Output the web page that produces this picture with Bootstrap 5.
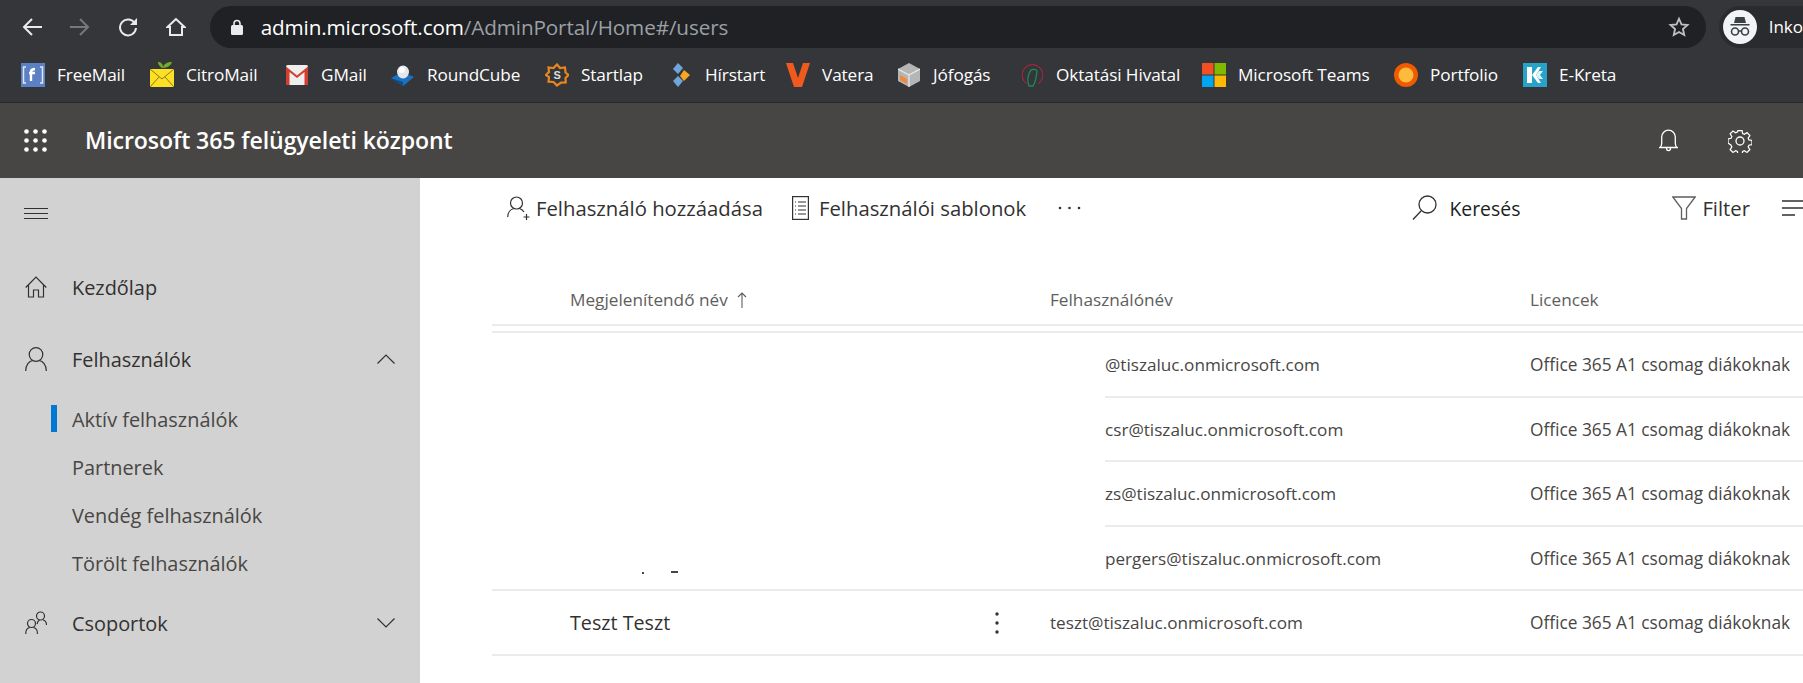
<!DOCTYPE html>
<html lang="hu">
<head>
<meta charset="utf-8">
<title>Microsoft 365 felügyeleti központ</title>
<link href="https://cdn.jsdelivr.net/npm/bootstrap@5.3.0/dist/css/bootstrap.min.css" rel="stylesheet">
<style>
html,body{height:683px;overflow:hidden;background:#fff}
body{font-family:"Open Sans","Noto Sans",sans-serif;color:#323130}
svg{display:block;flex:none}
.chrome-top{height:48px;background:#35363a;padding:6px 0 0 0}
.nav-btns{width:211px;padding-left:22px;gap:28px;height:42px}
.addr{width:1496px;height:42px;background:#202124;border-radius:21px;padding:0 16px 0 21px;flex:none}
.addr-text{font-size:20.7px;color:#9aa0a6;margin-left:18px;line-height:1;letter-spacing:-.12px}
.addr-text b{font-weight:400;color:#fff}
.profile{margin-left:13px;height:42px;flex:none;background:#2a2b2e;border-radius:21px 0 0 21px;padding-left:4px;gap:12px}
.profile-face{width:34px;height:34px;border-radius:50%;background:#f1f3f4}
.profile span{color:#fff;font-size:17px}
.marks{height:55px;background:#35363a;border-bottom:1px solid #27282b;padding-left:21px;display:grid;grid-template-columns:129px 135px 106px 154px 124px 117px 111px 123px 182px 192px 129px 1fr;align-items:center}
.mark-item{display:flex;align-items:center;color:#fff;font-size:17.2px;white-space:nowrap;letter-spacing:-.1px}
.mark-icon{width:24px;margin-right:12px;flex:none;display:flex;justify-content:center}
.o365-bar{height:75px;background:#484644;color:#fff;padding:0 51px 0 24px}
.o365-title{font-size:23.1px;font-weight:600;margin-left:38px;letter-spacing:-.1px}
.o365-tools{gap:50px}
.shell{height:505px}
.side{width:420px;background:#d2d2d2;flex:none;position:relative}
.burger{padding:30px 0 0 24px;height:62px}
.burger i{display:block;width:24px;height:1px;background:#323130;margin-bottom:4px}
.side-row{display:flex;align-items:center;padding-left:25px;height:40px;font-size:19.9px;color:#323130}
.side-row .lbl{margin-left:25px;flex-grow:1;padding-top:2px}
.side-row .chev{margin-right:25px}
.side-sub{display:flex;align-items:center;height:48px;font-size:19.9px;padding:2px 0 0 72px;color:#484644;position:relative}
.side-sub.on::before{content:"";position:absolute;left:51px;top:10px;width:6px;height:27px;background:#0078d4}
.r1{margin-top:27px}.r2{margin-top:32px}.subs{margin-top:16px}.r3{margin-top:16px}
.work{flex-grow:1;min-width:0;overflow:hidden;padding-left:72px}
.tbar{height:60px;font-size:20.3px;color:#323130;padding-left:15px}
.tbar .it{display:flex;align-items:center;white-space:nowrap}
.it1{gap:6px}.it2{gap:10px;margin-left:29px}.it3{margin-left:32px}
.it4{gap:12px;margin-left:auto;margin-right:152px;color:#201f1e;font-size:19.4px;font-weight:500}
.it4 span{padding-top:2px}
.it5{gap:6px}
.it6{margin-left:32px;margin-right:-1px}
.thead-row{display:grid;grid-template-columns:558px 480px 1fr;height:88px;padding-top:44px;font-size:17.2px;color:#605e5c;border-bottom:2px solid #edebe9}
.thead-row>div{line-height:33px;padding-top:1px}
.th1{padding-left:78px;display:flex;align-items:flex-start;gap:9px}
.th1 svg{margin-top:9px}
.lead-line{height:5px;border-bottom:2px solid #edebe9;box-sizing:content-box;padding-top:0}
.mask-row{display:grid;grid-template-columns:613px 425px 1fr;height:64.5px;font-size:17.15px;color:#484644}
.mask-row.last-mask{height:62.5px}
.mask-row>div{display:flex;align-items:center;white-space:nowrap;padding-top:2px}
.mask-row .lined{border-bottom:2px solid #edebe9}
.mask-row .lic,.user-row .lic{font-size:17.3px}
.frag{position:relative;height:100%}
.frag svg{position:absolute;left:150px;top:44px}
.user-row{display:grid;grid-template-columns:558px 480px 1fr;height:67px;font-size:17.15px;color:#484644;border-top:2px solid #edebe9;border-bottom:2px solid #edebe9}
.user-row>div{display:flex;align-items:center;white-space:nowrap;padding-top:1px}
.uname{padding-left:78px;padding-right:51px;justify-content:space-between;font-size:19.7px;font-weight:500;color:#323130}
</style>
</head>
<body>
<div class="chrome-top d-flex">
  <div class="nav-btns d-flex align-items-center">
    <svg width="20" height="20" viewBox="0 0 20 20" fill="none" stroke="#e8eaed" stroke-width="2"><path d="M20 10H2M10 2l-8 8 8 8"/></svg>
    <svg width="20" height="20" viewBox="0 0 20 20" fill="none" stroke="#77787b" stroke-width="2"><path d="M0 10h18M10 2l8 8-8 8"/></svg>
    <svg width="20" height="20" viewBox="0 0 20 20" fill="none" stroke="#e8eaed" stroke-width="2"><path d="M17 6.500A8 8 0 1 0 18 11"/><path d="M19 1v7h-7z" fill="#e8eaed" stroke="none"/></svg>
    <svg width="20" height="20" viewBox="0 0 20 20" fill="none" stroke="#e8eaed" stroke-width="2"><path d="M10 2L1.500 10H4v8h12v-8h2.500z" stroke-linejoin="miter"/></svg>
  </div>
  <div class="addr d-flex align-items-center">
    <svg width="12" height="16" viewBox="0 0 12 16"><path d="M3 6V4.500a3 3 0 0 1 6 0V6" fill="none" stroke="#e8eaed" stroke-width="1.600"/><rect y="6" width="12" height="10" rx="1.500" fill="#e8eaed"/></svg>
    <div class="addr-text flex-grow-1"><b>admin.microsoft.com</b>/AdminPortal/Home#/users</div>
    <svg width="22" height="22" viewBox="0 0 24 24" fill="none" stroke="#bdc1c6" stroke-width="2"><path d="M12 3l2.700 6.100 6.600.7-5 4.400 1.400 6.500L12 17.400l-5.700 3.300 1.400-6.500-5-4.400 6.600-.7z"/></svg>
  </div>
  <div class="profile d-flex align-items-center flex-grow-1">
    <div class="profile-face d-flex align-items-center justify-content-center">
      <svg width="26" height="26" viewBox="0 0 26 26"><path d="M7 9l1.500-6h9L19 9zM3.500 10h19v1.500h-19z" fill="#3c4043"/><circle cx="8" cy="17.500" r="3.500" fill="none" stroke="#3c4043" stroke-width="1.600"/><circle cx="18" cy="17.500" r="3.500" fill="none" stroke="#3c4043" stroke-width="1.600"/><path d="M11.500 17h3" stroke="#3c4043" stroke-width="1.500"/></svg>
    </div>
    <span>Inko</span>
  </div>
</div>
<div class="marks">
  <div class="mark-item"><span class="mark-icon"><svg width="24" height="24" viewBox="0 0 24 24"><rect width="24" height="24" fill="#5b80c4"/><path d="M5 4H2.500v16H5M19 4h2.500v16H19" fill="none" stroke="#dfe7f5" stroke-width="1.500"/><path d="M10 18V9c0-2 1-3 4-3M8 10h6" fill="none" stroke="#fff" stroke-width="2.400"/></svg></span>FreeMail</div>
  <div class="mark-item"><span class="mark-icon"><svg width="24" height="28" viewBox="0 0 24 28"><path d="M12 7C9 5 8 3 8 1c3 0 5 2 5 5 1-3 4-5 9-5-1 3-4 6-10 6z" fill="#6fae2c"/><rect y="8" width="24" height="18" fill="#fde025"/><path d="M0 8l12 10L24 8M0 26l9-10M24 26l-9-10" fill="none" stroke="#8a7a10" stroke-width="1"/></svg></span>CitroMail</div>
  <div class="mark-item"><span class="mark-icon"><svg width="22" height="20" viewBox="0 0 22 20"><rect width="22" height="20" rx="1.500" fill="#eee"/><path d="M0 1.500l11 9 11-9V20h-3.500V7L11 13 3.500 7v13H0z" fill="#d23f31"/></svg></span>GMail</div>
  <div class="mark-item"><span class="mark-icon"><svg width="24" height="24" viewBox="0 0 24 24"><path d="M0 15l11-6 12 5-11 9z" fill="#1d72c0"/><path d="M0 15l12 8v-4z" fill="#0d4c8a"/><ellipse cx="12" cy="9" rx="6" ry="6.500" fill="#e4e8ec"/><ellipse cx="11" cy="7" rx="3" ry="3" fill="#fff"/></svg></span>RoundCube</div>
  <div class="mark-item"><span class="mark-icon"><svg width="24" height="24" viewBox="0 0 24 24"><path d="M12 1.500l3 3.500 5-.5.500 5 3 2.500-3 3 .2 4.500-4.700.2L12 22.500 8.500 19l-5-.3.500-4.700L.7 12 4 9l-.5-4.500 5 .5z" fill="none" stroke="#e8871e" stroke-width="2.200"/><text x="12" y="16" font-size="11" font-weight="700" text-anchor="middle" fill="#ddd" font-family="Liberation Sans,sans-serif">S</text></svg></span>Startlap</div>
  <div class="mark-item"><span class="mark-icon"><svg width="20" height="24" viewBox="0 0 20 24"><path d="M7 0l5 5-5 6-5-5z" fill="#6ea6dc"/><path d="M13 7l6 5-6 6-4-5z" fill="#f5a623"/><path d="M7 13l5 5-5 6-5-6z" fill="#6ea6dc"/></svg></span>Hírstart</div>
  <div class="mark-item"><span class="mark-icon"><svg width="24" height="24" viewBox="0 0 24 24"><path d="M0 0h7l5 15L17 0h7l-8 24H8z" fill="#f05a1e"/></svg></span>Vatera</div>
  <div class="mark-item"><span class="mark-icon"><svg width="22" height="24" viewBox="0 0 22 24"><path d="M11 0l11 6v12l-11 6L0 18V6z" fill="#b5b5b5"/><path d="M0 6l11 6 11-6M11 12v12" fill="none" stroke="#e8e8e8" stroke-width="1.200"/><path d="M2 12l7 4v5l-7-4z" fill="#ef8a3c"/></svg></span>Jófogás</div>
  <div class="mark-item"><span class="mark-icon"><svg width="21" height="24" viewBox="0 0 21 24" fill="none"><path d="M5 21A10.500 10.500 0 1 1 16 21" stroke="#c4223d" stroke-width="1"/><path d="M7 23c-2-6-1-12 2-16 2-1 5-1 6 1-1 6-1 11-4 15z" stroke="#1c8a5c" stroke-width="1.300"/></svg></span>Oktatási Hivatal</div>
  <div class="mark-item"><span class="mark-icon"><svg width="24" height="24" viewBox="0 0 24 24"><rect width="11.500" height="11.500" fill="#f25022"/><rect x="12.500" width="11.500" height="11.500" fill="#7fba00"/><rect y="12.500" width="11.500" height="11.500" fill="#00a4ef"/><rect x="12.500" y="12.500" width="11.500" height="11.500" fill="#ffb900"/></svg></span>Microsoft Teams</div>
  <div class="mark-item"><span class="mark-icon"><svg width="24" height="24" viewBox="0 0 24 24"><circle cx="12" cy="12" r="12" fill="#f05a00"/><circle cx="12" cy="12" r="7.500" fill="#fdbb3e"/></svg></span>Portfolio</div>
  <div class="mark-item"><span class="mark-icon"><svg width="24" height="24" viewBox="0 0 24 24"><rect width="24" height="24" fill="#27a3c9"/><path d="M4 4h5v16H4zM9 12l6-8h3l-5 8 5 8h-3z" fill="#fff"/><path d="M16 8l-3 4 3 4h4l-3-4 3-4z" fill="#e2f4fa"/></svg></span>E-Kreta</div>
</div>
<div class="o365-bar d-flex align-items-center">
  <svg width="23" height="23" viewBox="0 0 23 23" fill="#fff"><circle cx="2.500" cy="2.500" r="2.300"/><circle cx="11.500" cy="2.500" r="2.300"/><circle cx="20.500" cy="2.500" r="2.300"/><circle cx="2.500" cy="11.500" r="2.300"/><circle cx="11.500" cy="11.500" r="2.300"/><circle cx="20.500" cy="11.500" r="2.300"/><circle cx="2.500" cy="20.500" r="2.300"/><circle cx="11.500" cy="20.500" r="2.300"/><circle cx="20.500" cy="20.500" r="2.300"/></svg>
  <div class="o365-title flex-grow-1">Microsoft 365 felügyeleti központ</div>
  <div class="o365-tools d-flex align-items-center">
    <svg width="19" height="23" viewBox="0 0 19 23" fill="none" stroke="#fff" stroke-width="1.300"><path d="M.7 18.500c1.500-1 2-2 2-4V8a6.800 6.800 0 0 1 13.600 0v6.500c0 2 .5 3 2 4z"/><path d="M7.500 19c0 3.500 4 3.500 4 0"/></svg>
    <svg width="24" height="24" viewBox="0 0 24 24" fill="none" stroke="#fff" stroke-width="1.300"><circle cx="12" cy="12" r="4"/><path d="M9.800 1h4.400l.6 3.200 1.800.8 2.800-1.800 3 3-1.800 2.800.8 1.800 3.200.6v4.400l-3.200.6-.8 1.800 1.800 2.800-3 3-2.800-1.800-1.800.8-.6 3.200H9.800l-.6-3.200-1.800-.8-2.800 1.800-3-3 1.800-2.800-.8-1.800L-.6 14V9.700l3.200-.6.800-1.800-1.800-2.800 3-3 2.800 1.800 1.800-.8z" transform="translate(.6 .6) scale(.95)"/></svg>
  </div>
</div>
<div class="shell d-flex">
  <nav class="side">
    <div class="burger"><i></i><i></i><i></i></div>
    <div class="side-row r1">
      <svg width="22" height="22" viewBox="0 0 22 22" fill="none" stroke="#323130" stroke-width="1.200"><path d="M.7 11.500L11 1l10.300 10.500M3.500 9v12h5v-7h5v7h5V9"/></svg>
      <span class="lbl">Kezdőlap</span>
    </div>
    <div class="side-row r2">
      <svg width="22" height="24" viewBox="0 0 22 24" fill="none" stroke="#323130" stroke-width="1.200"><circle cx="11" cy="7.500" r="6.800"/><path d="M.7 24c0-6 3.500-10 7-10.500M21.300 24c0-6-3.500-10-7-10.500"/></svg>
      <span class="lbl">Felhasználók</span>
      <svg class="chev" width="18" height="10" viewBox="0 0 18 10" fill="none" stroke="#323130" stroke-width="1.200"><path d="M.5 9.500L9 1l8.500 8.500"/></svg>
    </div>
    <div class="subs">
      <div class="side-sub on">Aktív felhasználók</div>
      <div class="side-sub">Partnerek</div>
      <div class="side-sub">Vendég felhasználók</div>
      <div class="side-sub">Törölt felhasználók</div>
    </div>
    <div class="side-row r3">
      <svg width="22" height="24" viewBox="0 0 22 24" fill="none" stroke="#323130" stroke-width="1.200"><circle cx="15.500" cy="5" r="4"/><circle cx="6.500" cy="12.500" r="4"/><path d="M.7 23c0-3 1.500-6 4-6.500M12.500 23c0-3-1.500-6-4-6.500M12 13c.5-2 1.500-3.500 2.500-4M21.500 14c0-2.500-1.500-4.500-3.500-5"/></svg>
      <span class="lbl">Csoportok</span>
      <svg class="chev" width="18" height="10" viewBox="0 0 18 10" fill="none" stroke="#323130" stroke-width="1.200"><path d="M.5.500L9 9l8.500-8.500"/></svg>
    </div>
  </nav>
  <main class="work">
    <div class="tbar d-flex align-items-center">
      <div class="it it1">
        <svg width="23" height="25" viewBox="0 0 23 25" fill="none" stroke="#323130" stroke-width="1.200"><circle cx="9.500" cy="7" r="6"/><path d="M.7 21c0-4 2.500-7.500 6-8.500M12.500 12.500c2 .6 3.500 2 4.500 3.500M19.500 18v6M16.500 21h6"/></svg>
        <span>Felhasználó hozzáadása</span>
      </div>
      <div class="it it2">
        <svg width="17" height="24" viewBox="0 0 17 24" fill="none" stroke="#323130" stroke-width="1.200"><rect x=".6" y=".6" width="15.800" height="22.800"/><path d="M6 6h8M6 10h8M6 14h8M6 18h8M3 6h1M3 10h1M3 14h1M3 18h1"/></svg>
        <span>Felhasználói sablonok</span>
      </div>
      <div class="it it3">
        <svg width="23" height="4" viewBox="0 0 23 4" fill="#323130"><circle cx="2" cy="2" r="1.300"/><circle cx="11.500" cy="2" r="1.300"/><circle cx="21" cy="2" r="1.300"/></svg>
      </div>
      <div class="it it4">
        <svg width="25" height="25" viewBox="0 0 25 25" fill="none" stroke="#323130" stroke-width="1.300"><circle cx="15.500" cy="9.500" r="8.500"/><path d="M9 16L1 24.500"/></svg>
        <span>Keresés</span>
      </div>
      <div class="it it5">
        <svg width="24" height="24" viewBox="0 0 24 24" fill="none" stroke="#605e5c" stroke-width="1.300"><path d="M.8 1h22.400L14.500 12.500V23h-5V12.500z"/></svg>
        <span>Filter</span>
      </div>
      <div class="it it6">
        <svg width="22" height="16" viewBox="0 0 22 16" fill="none" stroke="#323130" stroke-width="1.300"><path d="M0 1h22M0 8h22M0 15h13"/></svg>
      </div>
    </div>
    <div class="thead-row">
      <div class="th1">Megjelenítendő név <svg width="10" height="16" viewBox="0 0 10 16" fill="none" stroke="#605e5c" stroke-width="1.100"><path d="M5 16V1M1 5l4-4 4 4"/></svg></div>
      <div>Felhasználónév</div>
      <div>Licencek</div>
    </div>
    <div class="lead-line"></div>
    <div class="mask-row"><div></div><div class="lined">@tiszaluc.onmicrosoft.com</div><div class="lined lic">Office 365 A1 csomag diákoknak</div></div>
    <div class="mask-row"><div></div><div class="lined">csr@tiszaluc.onmicrosoft.com</div><div class="lined lic">Office 365 A1 csomag diákoknak</div></div>
    <div class="mask-row"><div></div><div class="lined">zs@tiszaluc.onmicrosoft.com</div><div class="lined lic">Office 365 A1 csomag diákoknak</div></div>
    <div class="mask-row last-mask"><div class="frag"><svg width="36" height="4" viewBox="0 0 36 4" fill="#484644"><rect x="0" y="1" width="2" height="2"/><rect x="29" y="0" width="7" height="2"/></svg></div><div>pergers@tiszaluc.onmicrosoft.com</div><div class="lic">Office 365 A1 csomag diákoknak</div></div>
    <div class="user-row">
      <div class="uname"><span>Teszt Teszt</span><svg width="4" height="22" viewBox="0 0 4 22" fill="#323130"><circle cx="2" cy="2" r="1.700"/><circle cx="2" cy="11" r="1.700"/><circle cx="2" cy="20" r="1.700"/></svg></div>
      <div>teszt@tiszaluc.onmicrosoft.com</div>
      <div class="lic">Office 365 A1 csomag diákoknak</div>
    </div>
  </main>
</div>
<script src="https://cdn.jsdelivr.net/npm/bootstrap@5.3.0/dist/js/bootstrap.bundle.min.js"></script>
</body>
</html>
